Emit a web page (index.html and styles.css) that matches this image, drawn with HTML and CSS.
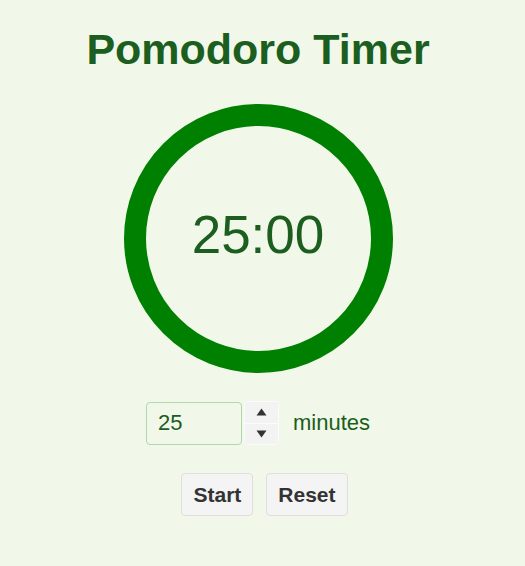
FILE: index.html
```html
<!DOCTYPE html>
<html lang="en">
<head>
<meta charset="utf-8">
<title>Pomodoro Timer</title>
<link rel="stylesheet" href="styles.css">
</head>
<body>
<main class="app">
  <h1 class="title">Pomodoro Timer</h1>
  <div class="dial">
    <svg class="ring" width="269" height="269" viewBox="0 0 269 269">
      <circle cx="134.5" cy="134.5" r="123.5" fill="none" stroke="#008000" stroke-width="22"/>
    </svg>
    <div class="time">25:00</div>
  </div>
  <div class="controls">
    <input class="minutes-input" type="text" inputmode="numeric" value="25" aria-label="Minutes">
    <div class="spinner">
      <button class="spin" aria-label="Increase">
        <svg width="11" height="8" viewBox="0 0 11 8"><path d="M5.5 0.5 L10.5 7.5 L0.5 7.5 Z" fill="#333"/></svg>
      </button>
      <button class="spin" aria-label="Decrease">
        <svg width="11" height="8" viewBox="0 0 11 8"><path d="M0.5 0.5 L10.5 0.5 L5.5 7.5 Z" fill="#333"/></svg>
      </button>
    </div>
    <span class="label">minutes</span>
  </div>
  <div class="buttons">
    <button class="btn">Start</button>
    <button class="btn">Reset</button>
  </div>
</main>
</body>
</html>
```

FILE: styles.css
```css
html, body {
  margin: 0;
  padding: 0;
  background: #f1f8e9;
}

body {
  font-family: "Liberation Sans", Arial, sans-serif;
  color: #1b5e20;
}

.app {
  display: flex;
  flex-direction: column;
  align-items: center;
  padding-right: 9px;
}

.title {
  margin: 24px 0 0;
  font-size: 43px;
  line-height: 50px;
  font-weight: bold;
  color: #1b5e20;
}

.dial {
  display: grid;
  margin-top: 30px;
  width: 269px;
  height: 269px;
}

.ring,
.time {
  grid-area: 1 / 1;
}

.ring {
  display: block;
}

.time {
  align-self: center;
  justify-self: center;
  font-size: 53px;
  line-height: 61px;
  padding-bottom: 8px;
  color: #1b5e20;
}

.controls {
  display: flex;
  align-items: center;
  margin-top: 28px;
}

.minutes-input {
  box-sizing: border-box;
  width: 96px;
  height: 43px;
  margin: 0;
  padding: 0 0 0 11px;
  border: 1px solid #b2d8b0;
  border-radius: 4px;
  background: #f1f8e9;
  font-family: "Liberation Sans", Arial, sans-serif;
  font-size: 22px;
  color: #1b5e20;
  outline: none;
}

.spinner {
  box-sizing: border-box;
  display: flex;
  flex-direction: column;
  width: 35px;
  height: 44px;
  margin-left: 2px;
  border: 1px solid #fbfbfb;
  border-radius: 4px;
  overflow: hidden;
  background: #f3f3f3;
}

.spin {
  flex: 1;
  display: flex;
  align-items: center;
  justify-content: center;
  margin: 0;
  padding: 0;
  border: 0;
  background: #f3f3f3;
}

.spin + .spin {
  border-top: 1px solid #fbfbfb;
}

.spin svg {
  display: block;
}

.label {
  margin-left: 14px;
  font-size: 22px;
  color: #1b5e20;
}

.buttons {
  display: flex;
  margin-top: 28px;
}

.btn {
  margin: 0 0 0 13px;
  padding: 8px 11px;
  border: 1px solid #dedede;
  border-radius: 4px;
  background: #f4f4f4;
  font-family: "Liberation Sans", Arial, sans-serif;
  font-size: 21px;
  line-height: 25px;
  font-weight: bold;
  color: #333;
}
```
